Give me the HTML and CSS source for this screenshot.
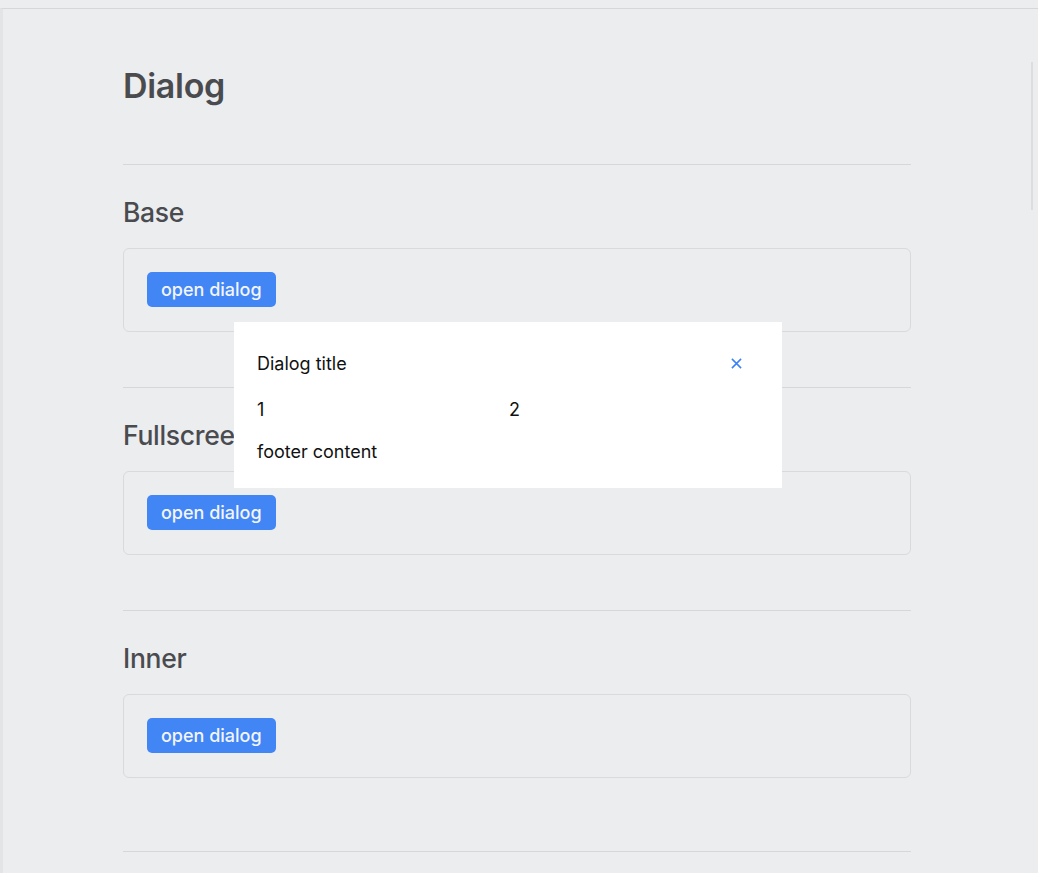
FILE: index.html
```html
<!DOCTYPE html>
<html lang="en">
<head>
<meta charset="utf-8">
<title>Dialog</title>
<link rel="stylesheet" href="styles.css">
</head>
<body>
<div class="frame">
  <main class="page">
    <h1 class="page-title">Dialog</h1>
    <section class="demo">
      <h2 class="demo-title">Base</h2>
      <div class="demo-card"><button class="btn">open dialog</button></div>
    </section>
    <section class="demo">
      <h2 class="demo-title">Fullscreen</h2>
      <div class="demo-card"><button class="btn">open dialog</button></div>
    </section>
    <section class="demo demo-last">
      <h2 class="demo-title">Inner</h2>
      <div class="demo-card"><button class="btn">open dialog</button></div>
    </section>
    <hr class="rule">
  </main>
  <div class="scroll-thumb"></div>
</div>
<div class="dialog" role="dialog">
  <div class="dialog-header">
    <span class="dialog-title">Dialog title</span>
    <svg class="dialog-close" width="12" height="12" viewBox="0 0 12 12"><path d="M1 1L11 11M11 1L1 11" stroke="#3b82f6" stroke-width="1.7" fill="none"/></svg>
  </div>
  <div class="dialog-body">
    <span>1</span>
    <span>2</span>
  </div>
  <div class="dialog-footer">footer content</div>
</div>
</body>
</html>
```
FILE: styles.css
```css
html, body {
  margin: 0;
  padding: 0;
  height: 100%;
  overflow: hidden;
}
body {
  background: #ecedef;
  font-family: Inter, "Noto Sans", sans-serif;
}
.frame {
  margin-top: 8px;
  border-top: 1px solid #d6d7d9;
  border-left: 3px solid #e3e4e6;
  height: 100%;
  position: relative;
}
.page {
  width: 788px;
  margin-left: 120px;
  padding-top: 53px;
}
.page-title {
  margin: 0;
  font-size: 34px;
  line-height: 48px;
  font-weight: 600;
  color: #4a4b4f;
  letter-spacing: -0.3px;
}
.demo {
  border-top: 1px solid #d6d7d9;
  margin-top: 54px;
  padding-top: 31px;
}
.demo + .demo {
  margin-top: 55px;
}
.demo-title {
  margin: 0 0 20px;
  font-size: 26.5px;
  line-height: 32px;
  font-weight: 500;
  color: #4a4b4f;
  letter-spacing: -0.3px;
}
.demo-card {
  border: 1px solid #d9dadc;
  border-radius: 6px;
  padding: 23px 23px 24px;
}
.btn {
  display: block;
  background: #4285f4;
  color: #f2f5fb;
  border: 0;
  border-radius: 5px;
  height: 35px;
  padding: 0 14px;
  font-family: Inter, "Noto Sans", sans-serif;
  font-size: 18px;
  font-weight: 500;
}
.rule {
  border: 0;
  border-top: 1px solid #d6d7d9;
  margin: 73px 0 0;
}
.scroll-thumb {
  position: absolute;
  left: 1028px;
  top: 53px;
  width: 2px;
  height: 148px;
  background: #dcdddf;
}
.dialog {
  position: absolute;
  left: 234px;
  top: 322px;
  width: 548px;
  box-sizing: border-box;
  background: #fff;
  padding: 26px 23px 22px;
  color: #111;
  font-size: 18px;
}
.dialog-header {
  display: flex;
  align-items: center;
  justify-content: space-between;
  height: 30px;
  padding-right: 17px;
}
.dialog-close {
  width: 11px;
  height: 11px;
}
.dialog-body {
  display: grid;
  grid-template-columns: 252px 1fr;
  margin-top: 18px;
  line-height: 28px;
}
.dialog-footer {
  margin-top: 14px;
  line-height: 28px;
}
```
